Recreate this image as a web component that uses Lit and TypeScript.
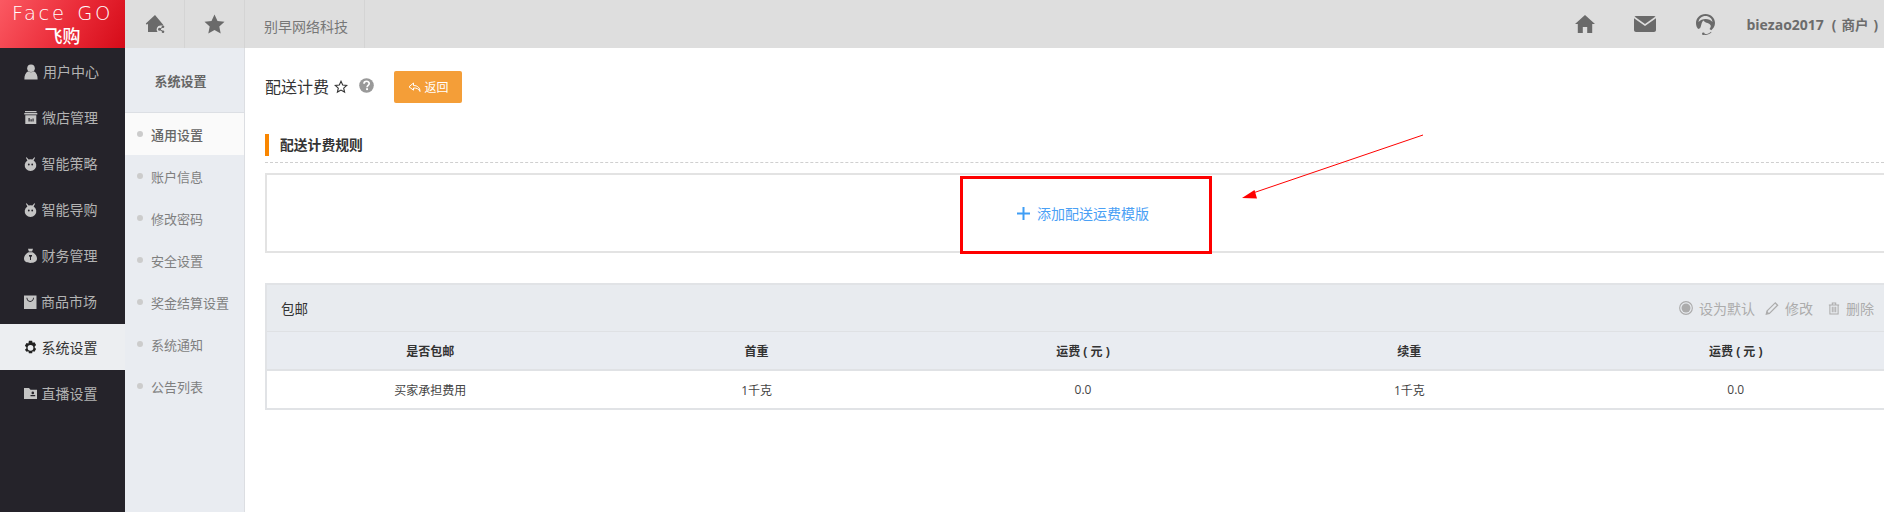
import { LitElement, html, css, svg } from "lit";
import { customElement } from "lit/decorators.js";

const ICONS: Record<string, any> = {
  user: svg`<circle cx="7" cy="4.200" r="3.800"/><path d="M4.200 7.300C1.500 8.800.2 11.500.4 15.500h13.200c.2-4-1.100-6.700-3.800-8.200-1.400 1.300-4.200 1.300-5.600 0z"/>`,
  store: svg`<path d="M1 1h11.500v1.300H1zM.3 3h13v1.600H.3z"/><path fill-rule="evenodd" d="M1.300 5.300h11V14h-11zM4.500 8v3.500h1.200V8zm2 1.200v2.300h1.200V9.200zm2-.6v2.900h1.100V8.600z"/>`,
  bot: svg`<path d="M2.600 1.200 4.600 3.600a5.600 5.600 0 0 1 3.800 0l2-2.400.7.500L9.600 4.400a5.800 5.800 0 1 1-6.200 0L1.900 1.700z"/><circle cx="4.800" cy="8.500" r=".9" fill="#25232a"/><circle cx="8.200" cy="8.500" r=".9" fill="#25232a"/>`,
  money: svg`<path d="M4 .8h5L8.100 3.400H4.900z"/><path fill-rule="evenodd" d="M4.500 4.300h4c3 1.500 4.500 4 4.500 6.300C13 13.600 10.300 15 6.500 15S0 13.600 0 10.600C0 8.300 1.500 5.800 4.500 4.300zM5 7v1.200l1 .8v3h1V9l1-.8V7z"/>`,
  bag: svg`<path fill-rule="evenodd" d="M0 1.500h12.500V15H0zM2.400 3.800c.3 2.800 1.700 4.100 3.800 4.100s3.500-1.300 3.800-4.100l-.9-.1C8.900 5.900 7.700 7 6.200 7S3.500 5.900 3.300 3.700z"/>`,
  gear: svg`<path fill-rule="evenodd" d="M4.900.8h3.200l.5 2 1.900-.6 1.600 2.800-1.400 1.400v1.200l1.400 1.400-1.600 2.800-1.900-.6-.5 2H4.900l-.5-2-1.900.6L.9 9.800l1.400-1.400V7.200L.9 5.800l1.600-2.800 1.900.6zM6.500 4.900a2.900 2.900 0 1 0 0 5.800 2.900 2.900 0 0 0 0-5.800z"/>`,
  folder: svg`<path fill-rule="evenodd" d="M0 2h5l1.500 1.700h6.500V13H0zM8.800 5.600a1.300 1.300 0 1 0 0 2.600 1.300 1.300 0 0 0 0-2.600zM6.500 9v1.200h4.700V9z"/>`,
};

const NAV = [
  { t: "用户中心", i: "user", w: 14 },
  { t: "微店管理", i: "store", w: 13 },
  { t: "智能策略", i: "bot", w: 12.5 },
  { t: "智能导购", i: "bot", w: 12.5 },
  { t: "财务管理", i: "money", w: 12.5 },
  { t: "商品市场", i: "bag", w: 12 },
  { t: "系统设置", i: "gear", w: 12.5, active: true },
  { t: "直播设置", i: "folder", w: 12.5 },
];
const SUB = ["通用设置", "账户信息", "修改密码", "安全设置", "奖金结算设置", "系统通知", "公告列表"];

@customElement("app-root")
export class AppRoot extends LitElement {
  static styles = css`
    :host {
      display: grid;
      grid-template-columns: 125px 1fr;
      grid-template-rows: 48px 464px;
      width: 100%;
      height: 512px;
      overflow: hidden;
      position: relative;
      background: #fff;
      font-family: "Open Sans", "Noto Sans CJK SC", sans-serif;
      font-size: 13px;
      color: #333;
    }
    .logo {
      background: linear-gradient(120deg, #fb5962 0%, #ea2b38 55%, #d50b18 100%);
      color: #fff;
      display: flex;
      flex-direction: column;
      align-items: center;
      overflow: hidden;
    }
    .logo-en {
      font-family: "DejaVu Sans", sans-serif;
      font-weight: 200;
      font-size: 19.500px;
      line-height: 18px;
      letter-spacing: 2.600px;
      margin-top: 5px;
      word-spacing: 2px;
      white-space: nowrap;
    }
    .logo-cn {
      font-family: "Noto Sans CJK SC", sans-serif;
      font-weight: 500;
      font-size: 18px;
      line-height: 20px;
      margin-top: 2px;
    }
    .topbar {
      background: #dedede;
      display: flex;
      align-items: stretch;
      color: #777;
    }
    .tab {
      display: flex;
      align-items: center;
      justify-content: center;
      border-right: 1px solid #d4d4d4;
      box-sizing: border-box;
    }
    .tab.icon { width: 60px; }
    .tab.text { width: 120px; font-size: 14px; padding: 3px 0 0 3px; }
    .topright {
      margin-left: auto;
      display: flex;
      align-items: center;
      padding-right: 6px;
    }
    .topright .ti { width: 60px; display: flex; justify-content: center; }
    .who {
      margin-left: 11px;
      font-weight: 700;
      font-size: 14px;
      color: #6c6c6c;
      white-space: nowrap;
      display: flex;
      gap: 8px;
      align-items: center;
    }
    .who .cn { font-size: 13.500px; word-spacing: 1.500px; }
    .body {
      grid-column: 1 / 3;
      display: grid;
      grid-template-columns: 125px 120px minmax(0, 1fr);
      min-height: 0;
    }
    .nav { background: #25232a; display: flex; flex-direction: column; }
    .nav-item {
      height: 46px;
      display: flex;
      align-items: center;
      gap: 5px;
      padding-left: 24px;
      font-size: 14px;
      color: #b3b3b3;
      box-sizing: border-box;
    }
    .nav-item svg { fill: #c4c4c4; flex: none; overflow: visible; }
    .nav-item.active { background: #eceef1; color: #333; }
    .nav-item.active svg { fill: #222; }
    .sub {
      background: #e9ecf1;
      border-right: 1px solid #dcdee2;
      box-sizing: border-box;
    }
    .sub-head {
      height: 64px;
      border-bottom: 1px solid #dcdfe4;
      display: flex;
      align-items: center;
      justify-content: center;
      font-size: 13px;
      font-weight: 700;
      color: #666;
      padding-right: 8px;
    }
    .sub-item {
      height: 42px;
      display: flex;
      align-items: center;
      padding-left: 12px;
      gap: 8px;
      color: #7f7f7f;
      font-size: 13px;
    }
    .sub-item i {
      width: 6px;
      height: 6px;
      border-radius: 50%;
      background: #cccccc;
      flex: none;
    }
    .sub-item.active { background: #fafafa; color: #666; font-weight: 500; }
    .main { padding: 23px 0 0 20px; min-width: 0; overflow: hidden; }
    .title-row { display: flex; align-items: center; height: 32px; }
    .title { font-size: 16px; color: #333; line-height: 32px; }
    .title-row .star { margin-left: 5px; }
    .title-row .q { margin-left: 11px; margin-top: -3px; }
    .back {
      margin-left: 20px;
      width: 68px;
      height: 32px;
      border-radius: 2px;
      background: #f49e38;
      color: #fff;
      font-size: 12px;
      display: flex;
      align-items: center;
      justify-content: center;
      gap: 4px;
    }
    .section {
      margin-top: 31px;
      height: 22px;
      border-left: 4px solid #f98600;
      padding-left: 11px;
      font-size: 13.800px;
      font-weight: 700;
      color: #333;
      line-height: 22px;
    }
    .dash { margin-top: 6px; border-top: 1px dashed #cfcfcf; }
    .add-box {
      margin-top: 10px;
      width: 1700px;
      height: 80px;
      box-sizing: border-box;
      border: 2px solid #e3e3e3;
      border-right: 0;
      display: flex;
      align-items: center;
      padding-left: 750px;
      color: #4aa0f5;
      font-size: 14px;
      gap: 7px;
    }
    .card {
      margin-top: 30px;
      width: 1700px;
      box-sizing: border-box;
      border: solid #e1e3e6;
      border-width: 2px 0 2px 2px;
    }
    .card-head {
      height: 46px;
      background: #e8ebef;
      border-bottom: 1px solid #dfe1e4;
      display: flex;
      align-items: center;
      justify-content: space-between;
      padding-left: 14px;
      padding-right: 91px;
      color: #333;
      font-size: 13.500px;
    }
    .acts { display: flex; align-items: center; color: #acacac; font-size: 14px; }
    .acts svg { flex: none; margin-right: 6px; }
    .acts span { margin-right: 10px; }
    .acts span.mid { margin-right: 15px; }
    .acts span.last { margin-right: 0; }
    table { border-collapse: collapse; table-layout: fixed; width: 1632px; }
    th {
      height: 37px;
      background: #e9ecf1;
      border-bottom: 2px solid #e0e2e5;
      font-size: 12px;
      font-weight: 700;
      color: #333;
      padding: 0;
    }
    td {
      height: 37px;
      padding: 0;
      text-align: center;
      font-size: 12px;
      color: #444;
    }
    .ann-rect {
      position: absolute;
      left: 960px;
      top: 176px;
      width: 252px;
      height: 78px;
      box-sizing: border-box;
      border: 3px solid #fe0000;
      pointer-events: none;
    }
    .ann-arrow { position: absolute; left: 1230px; top: 125px; pointer-events: none; }
  `;

  private navIcon(name: string, w: number) {
    return html`<svg width=${w} height="15" viewBox="0 0 ${w} 15">${ICONS[name]}</svg>`;
  }

  render() {
    return html`
      <div class="logo">
        <div class="logo-en">Face GO</div>
        <div class="logo-cn">飞购</div>
      </div>
      <div class="topbar">
        <div class="tab icon">
          <svg width="20" height="20" viewBox="0 0 20 20" fill="#6a6a6a">
            <path d="M10 1 .8 9.500l1 1.200L3 9.700V18h9.500a4 4 0 0 1 3-6.500l2.300-.1.400-.7z"/>
            <path d="M14.500 15.200 18 13M14.500 15.200l3.500 2.400" stroke="#6a6a6a" stroke-width="1"/>
            <circle cx="14.500" cy="15.200" r="1.500"/><circle cx="18" cy="12.800" r="1.300"/><circle cx="18" cy="17.700" r="1.300"/>
          </svg>
        </div>
        <div class="tab icon">
          <svg width="21" height="20" viewBox="0 0 21 20" fill="#6a6a6a"><path d="M10.500 .5l3 6.500 7 .8-5.200 4.800 1.400 7-6.200-3.500-6.200 3.500 1.400-7L.5 7.800l7-.8z"/></svg>
        </div>
        <div class="tab text">别早网络科技</div>
        <div class="topright">
          <div class="ti">
            <svg width="20" height="18" viewBox="0 0 20 18" fill="#6a6a6a"><path d="M10 0 0 9h2.800v9h5v-6h4.400v6h5V9H20z"/></svg>
          </div>
          <div class="ti">
            <svg width="22" height="16" viewBox="0 0 22 16" fill="#6a6a6a"><path d="M2 0h18c.7 0 1.200.2 1.500.6L11 8 .5.600C.8.200 1.300 0 2 0z"/><path d="M0 2.300V14c0 1.100.9 2 2 2h18c1.100 0 2-.9 2-2V2.300L11 10z"/></svg>
          </div>
          <div class="ti">
            <svg width="21" height="21" viewBox="0 0 21 21" fill="#6a6a6a"><path fill-rule="evenodd" d="M10.500 0C5 0 1 4 1 9c0 2.500.8 4.500 2.200 6l1.800-.8C6.500 12.500 6 8.500 8.500 6.500c2 3 6.500 2.300 7.200 5 .3 1.200-.4 2.400-1.200 3.500l1.800 1.200c2-1.700 3.700-4 3.700-7.200 0-5-4-9-9.500-9zm0 2c3.800 0 6.500 2.500 7 6-2.800-3.800-10.700-4-14 0 .5-3.500 3.200-6 7-6z"/><path d="M8 19.500c2.800 1 5.500.5 8-1.800l.5.600c-2.700 2.500-5.800 3.100-8.500 2.200z"/><circle cx="8.300" cy="19.700" r="1.300"/></svg>
          </div>
          <div class="who"><span>biezao2017</span><span class="cn">( 商户 )</span></div>
        </div>
      </div>
      <div class="body">
        <nav class="nav">
          ${NAV.map(
            (n) => html`<div class="nav-item ${n.active ? "active" : ""}">${this.navIcon(n.i, n.w)}<span>${n.t}</span></div>`
          )}
        </nav>
        <aside class="sub">
          <div class="sub-head">系统设置</div>
          ${SUB.map(
            (s, i) => html`<div class="sub-item ${i === 0 ? "active" : ""}"><i></i><span>${s}</span></div>`
          )}
        </aside>
        <main class="main">
          <div class="title-row">
            <span class="title">配送计费</span>
            <svg class="star" width="14" height="14" viewBox="0 0 14 14" fill="none" stroke="#333" stroke-width="1.100"><path d="M7 1.300l1.700 3.700 4 .4-3 2.700.9 4L7 10.100l-3.600 2 .9-4-3-2.700 4-.4z"/></svg>
            <svg class="q" width="15" height="15" viewBox="0 0 15 15"><circle cx="7.500" cy="7.500" r="7.300" fill="#999"/><path d="M5 5.700c0-3.200 5.200-3.200 5.200-.2 0 2-2.100 1.900-2.100 3.700" fill="none" stroke="#fff" stroke-width="1.700"/><rect x="7.100" y="10.200" width="1.900" height="1.900" fill="#fff"/></svg>
            <div class="back">
              <svg width="13" height="11" viewBox="0 0 13 11" fill="none" stroke="#fff" stroke-width="1"><path d="M5.500 1 1 4.800l4.500 3.400V6c3 0 5.200.6 6.500 3.500 0-3.800-2.500-6-6.500-6z"/></svg>
              <span>返回</span>
            </div>
          </div>
          <div class="section">配送计费规则</div>
          <div class="dash"></div>
          <div class="add-box">
            <svg width="13" height="13" viewBox="0 0 13 13" fill="#3f9df5"><rect x="5.500" width="2" height="13"/><rect y="5.500" width="13" height="2"/></svg>
            <span>添加配送运费模版</span>
          </div>
          <div class="card">
            <div class="card-head">
              <span>包邮</span>
              <div class="acts">
                <svg width="14" height="14" viewBox="0 0 15 15"><circle cx="7.500" cy="7.500" r="6.800" fill="none" stroke="#acacac" stroke-width="1.200"/><circle cx="7.500" cy="7.500" r="4.800" fill="#acacac"/></svg>
                <span>设为默认</span>
                <svg width="14" height="15" viewBox="0 0 15 15" fill="#acacac"><path fill-rule="evenodd" d="M11 .5l3.500 3.500L5 13.500l-4.500 1 1-4.500zM10.800 2.500 3 10.300l.2 1.500 1.400.2 7.900-7.900z"/></svg>
                <span class="mid">修改</span>
                <svg width="12" height="15" viewBox="0 0 14 15" fill="none" stroke="#acacac" stroke-width="1.200"><path d="M1 3.300h12M5 3.300V1h4v2.300M2.200 3.300V14h9.600V3.300M5 5.500v6.500M7 5.500v6.500M9 5.500v6.500"/></svg>
                <span class="last">删除</span>
              </div>
            </div>
            <table>
              <thead>
                <tr><th>是否包邮</th><th>首重</th><th>运费 ( 元 )</th><th>续重</th><th>运费 ( 元 )</th></tr>
              </thead>
              <tbody>
                <tr><td>买家承担费用</td><td>1千克</td><td>0.0</td><td>1千克</td><td>0.0</td></tr>
              </tbody>
            </table>
          </div>
        </main>
      </div>
      <div class="ann-rect"></div>
      <svg class="ann-arrow" width="200" height="80" viewBox="0 0 200 80" fill="#fe0000">
        <line x1="193" y1="10" x2="20" y2="69" stroke="#fe0000" stroke-width="1"/>
        <path d="M12 73 24.500 65 L 27 73.500z"/>
      </svg>
    `;
  }
}
